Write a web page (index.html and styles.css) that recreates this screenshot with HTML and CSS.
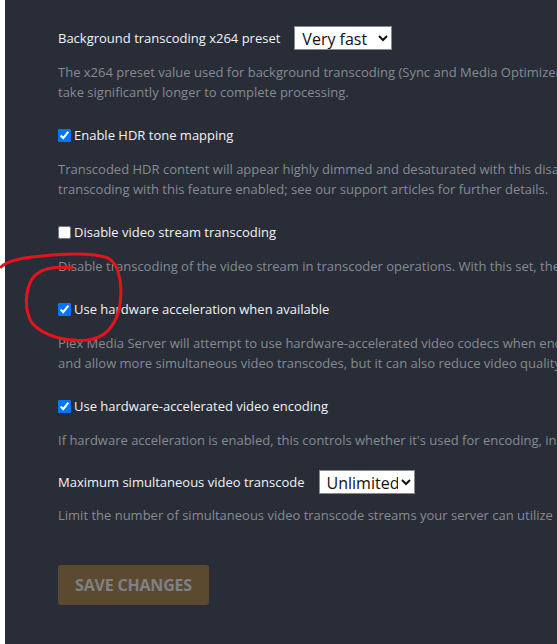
FILE: index.html
```html
<!DOCTYPE html>
<html lang="en">
<head>
  <meta charset="UTF-8">
  <meta name="viewport" content="width=device-width, initial-scale=1.0">
  <title>Transcoder settings</title>
  <link rel="stylesheet" href="styles.css">
</head>
<body>
  <div class="settings-panel">
    <form class="settings-form">
      <!-- background preset -->
      <div class="setting">
        <div class="setting-head with-select">
          <label for="bg-preset">Background transcoding x264 preset</label>
          <select id="bg-preset" class="setting-select">
            <option>Very fast</option>
            <option>Faster</option>
            <option>Fast</option>
            <option>Medium</option>
          </select>
        </div>
        <p class="setting-desc">The x264 preset value used for background transcoding (Sync and Media Optimizer). Slower values will result in better video quality and smaller file sizes, but will<br>take significantly longer to complete processing.</p>
      </div>

      <div class="setting">
        <label class="setting-head">
          <input type="checkbox" checked> Enable HDR tone mapping
        </label>
        <p class="setting-desc">Transcoded HDR content will appear highly dimmed and desaturated with this disabled. Your server may not be able to handle as many simultaneous<br>transcoding with this feature enabled; see our support articles for further details.</p>
      </div>

      <div class="setting">
        <label class="setting-head">
          <input type="checkbox"> Disable video stream transcoding
        </label>
        <p class="setting-desc">Disable transcoding of the video stream in transcoder operations. With this set, the server will only transcode audio and subtitles.</p>
      </div>

      <div class="setting">
        <label class="setting-head">
          <input type="checkbox" checked> Use hardware acceleration when available
        </label>
        <p class="setting-desc">Plex Media Server will attempt to use hardware-accelerated video codecs when encoding and decoding video. Hardware acceleration can make transcoding faster<br>and allow more simultaneous video transcodes, but it can also reduce video quality and compatibility.</p>
      </div>

      <div class="setting">
        <label class="setting-head">
          <input type="checkbox" checked> Use hardware-accelerated video encoding
        </label>
        <p class="setting-desc">If hardware acceleration is enabled, this controls whether it's used for encoding, in addition to decoding.</p>
      </div>

      <div class="setting last">
        <div class="setting-head with-select">
          <label for="max-transcode">Maximum simultaneous video transcode</label>
          <select id="max-transcode" class="setting-select">
            <option>Unlimited</option>
            <option>1</option>
            <option>2</option>
            <option>4</option>
          </select>
        </div>
        <p class="setting-desc tight">Limit the number of simultaneous video transcode streams your server can utilize</p>
      </div>

      <button type="button" class="btn-save" disabled>SAVE CHANGES</button>
    </form>
  </div>

  <!-- hand-drawn red ring around the hardware acceleration checkbox -->
  <svg class="scribble" width="557" height="644" viewBox="0 0 557 644">
    <path d="M1 267 C 6 262, 16 259, 32 257 C 58 254, 92 252, 108 258 C 121 265, 123 290, 119 310 C 114 328, 104 338, 88 340 C 68 342, 44 337, 32 323 C 24 310, 25 291, 32 279 C 40 268, 55 266, 72 268"
          fill="none" stroke="#e3141c" stroke-width="3" stroke-linecap="round" stroke-linejoin="round"/>
  </svg>
</body>
</html>
```

FILE: styles.css
```css
html, body {
    margin: 0;
    height: 100%;
    overflow: hidden;
}

body {
    font-family: "Open Sans", "Noto Sans", Arial, sans-serif;
    background-color: #fff;
    position: relative;
}

/* dark settings area */
.settings-panel {
    margin-left: 5px;
    min-height: 100%;
    background-color: #282d38;
    padding: 26px 0 0 53px;
    box-sizing: border-box;
}

.settings-form {
    width: 1200px;
}

.setting {
    margin-bottom: 23px;
}

.setting.last {
    margin-top: -3px;
}

.setting-head {
    display: flex;
    align-items: center;
    height: 20px;
    margin-bottom: 14px;
    font-size: 13px;
    color: #f2f3f5;
}

.setting-head input[type="checkbox"] {
    width: 13px;
    height: 13px;
    margin: 0 3px 0 0;
}

.setting-head.with-select {
    height: 24px;
    margin-bottom: 12px;
}

.setting-select {
    margin-left: 14px;
    height: 24px;
    padding: 0 0 0 3px;
    font-family: "Open Sans", "Noto Sans", Arial, sans-serif;
    font-size: 16px;
    color: #111;
    background-color: #fff;
    border: 1px solid #8a8a8a;
    border-radius: 0;
}

#bg-preset {
    width: 98px;
}

#max-transcode {
    width: 96px;
}

.setting-desc {
    margin: 0;
    font-size: 13px;
    line-height: 20px;
    color: #878b91;
    white-space: nowrap;
}

.setting-desc.tight {
    margin-top: -1px;
}

.btn-save {
    margin-top: 17px;
    width: 151px;
    height: 40px;
    border: none;
    border-radius: 3px;
    background-color: #5c4a30;
    color: #7e8186;
    font-family: "Open Sans", "Noto Sans", Arial, sans-serif;
    font-size: 16px;
    font-weight: 700;
    letter-spacing: -0.2px;
}

.scribble {
    position: absolute;
    left: 0;
    top: 0;
    pointer-events: none;
}
```
